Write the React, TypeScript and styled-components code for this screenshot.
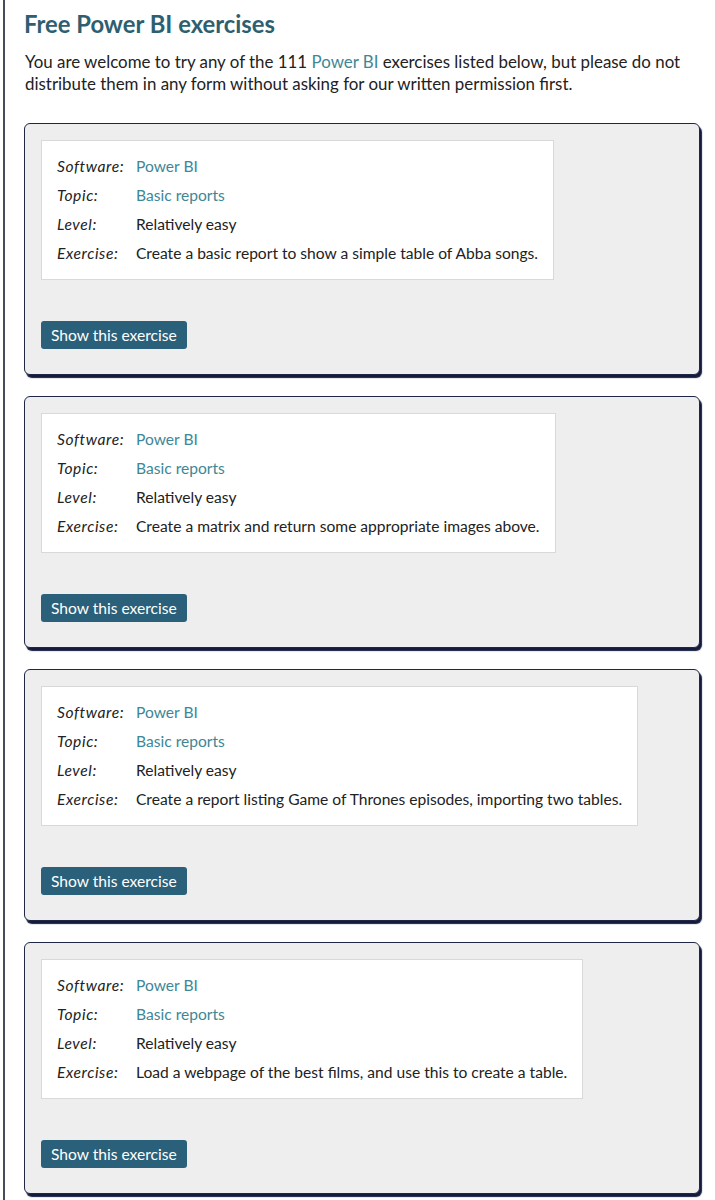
import styled, { createGlobalStyle } from "styled-components";

const GlobalStyle = createGlobalStyle`
  body {
    margin: 0;
    background: #ffffff;
    font-family: Lato, "Noto Sans", sans-serif;
    color: #222222;
  }
`;

const Page = styled.div`
  margin-left: 3px;
  border-left: 2px solid #454b5a;
  padding: 9px 15px 20px 19px;
  min-height: 1200px;
  box-sizing: border-box;
`;

const Title = styled.h1`
  margin: 0;
  font-size: 23.8px;
  line-height: 30px;
  font-weight: 700;
  color: #2d5f71;
`;

const Intro = styled.p`
  margin: 12px 0 28px;
  font-size: 16.9px;
  line-height: 22px;
  padding-left: 1px;
`;

const TealLink = styled.a`
  color: #3d8796;
  text-decoration: none;
`;

const Card = styled.div`
  background: #eeeeee;
  border: 1px solid #1f2747;
  border-radius: 6px;
  box-shadow: 2px 3px 1px #141b3d;
  padding: 16px 16px 25px;
  margin-bottom: 21px;
`;

const InfoBox = styled.div`
  display: inline-grid;
  grid-template-columns: 79px auto;
  background: #ffffff;
  border: 1px solid #d9d9d9;
  padding: 11px 15px;
  font-size: 15.6px;
  line-height: 29px;
`;

const Label = styled.span`
  font-style: italic;
  letter-spacing: 0.6px;
`;

const Value = styled.span<{ $link?: boolean }>`
  color: ${(p) => (p.$link ? "#3d8796" : "#222222")};
`;

const Button = styled.button`
  display: block;
  margin-top: 41px;
  height: 28px;
  padding: 0 10px;
  border: none;
  border-radius: 3px;
  background: #2a6079;
  color: #ffffff;
  font-family: Lato, "Noto Sans", sans-serif;
  font-size: 15.6px;
  cursor: pointer;
`;

const exercises = [
  "Create a basic report to show a simple table of Abba songs.",
  "Create a matrix and return some appropriate images above.",
  "Create a report listing Game of Thrones episodes, importing two tables.",
  "Load a webpage of the best films, and use this to create a table.",
];

export default function App() {
  return (
    <>
      <GlobalStyle />
      <Page>
        <Title>Free Power BI exercises</Title>
        <Intro>
          You are welcome to try any of the 111 <TealLink href="#">Power BI</TealLink> exercises
          listed below, but please do not distribute them in any form without asking for our
          written permission first.
        </Intro>
        {exercises.map((text) => (
          <Card key={text}>
            <InfoBox>
              <Label>Software:</Label>
              <Value $link>Power BI</Value>
              <Label>Topic:</Label>
              <Value $link>Basic reports</Value>
              <Label>Level:</Label>
              <Value>Relatively easy</Value>
              <Label>Exercise:</Label>
              <Value>{text}</Value>
            </InfoBox>
            <Button>Show this exercise</Button>
          </Card>
        ))}
      </Page>
    </>
  );
}
